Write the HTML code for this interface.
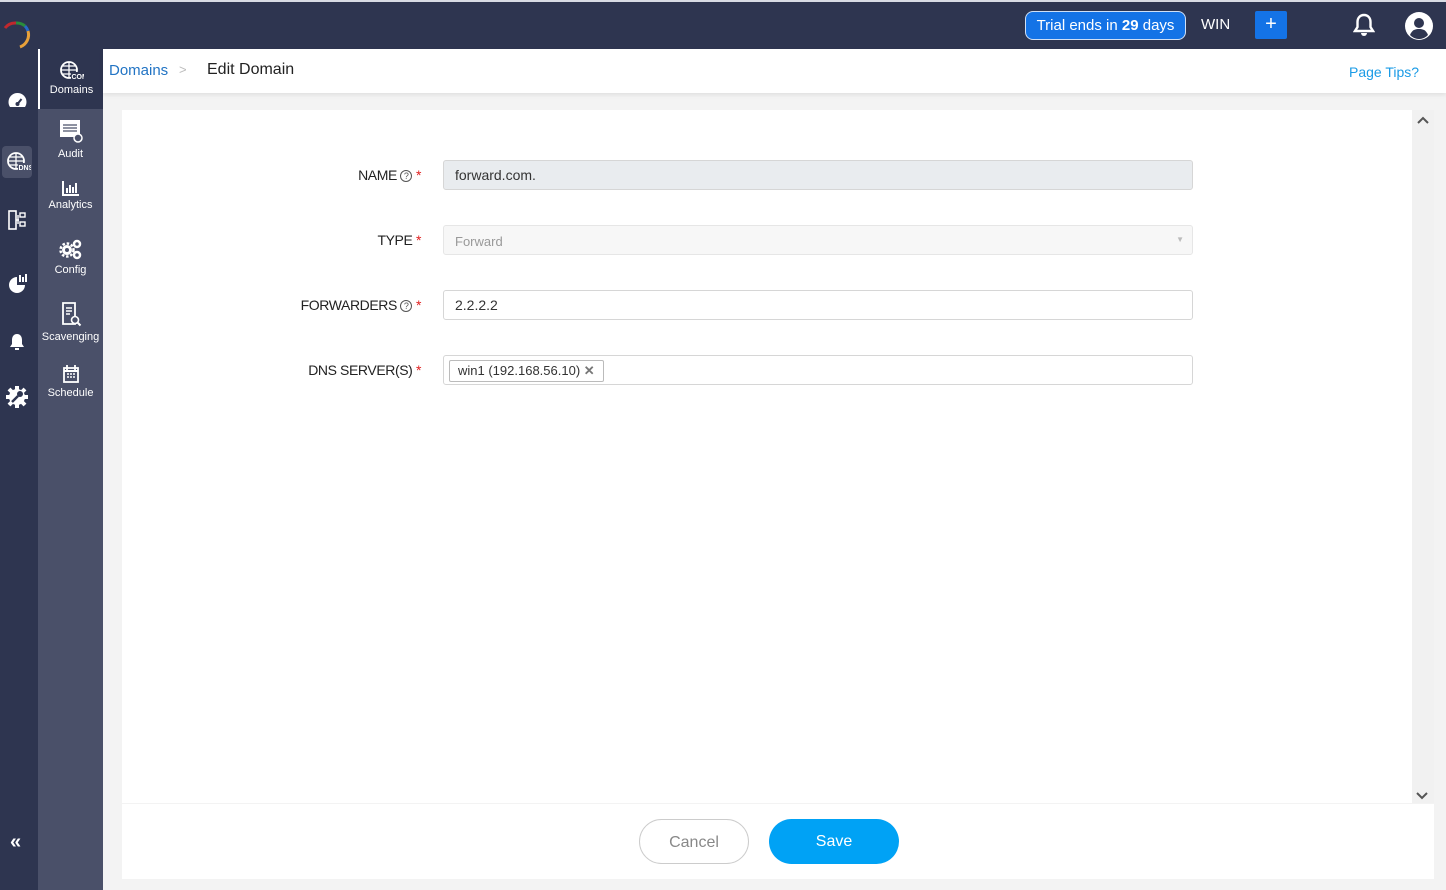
<!DOCTYPE html>
<html><head><meta charset="utf-8"><style>
*{box-sizing:border-box;margin:0;padding:0}
body{width:1446px;height:890px;overflow:hidden;font-family:"Liberation Sans",Arial,sans-serif;background:#f3f3f3;position:relative}
.top{position:absolute;left:0;top:0;width:1446px;height:49px;background:#2e3550;border-top:2px solid #d8dbe3}
.rail{position:absolute;left:0;top:49px;width:38px;height:841px;background:#2e3550}
.side{position:absolute;left:38px;top:49px;width:65px;height:841px;background:#4a5069}
.si{position:absolute;left:0;width:65px;text-align:center;color:#fff;font-size:11px}
.si svg{display:block;margin:0 auto 3px}
.crumb{position:absolute;left:103px;top:49px;width:1343px;height:44px;background:#fff;box-shadow:0 2px 4px rgba(0,0,0,.08)}
.card{position:absolute;left:122px;top:110px;width:1290px;height:693px;background:#fff}
.sb{position:absolute;left:1412px;top:110px;width:22px;height:693px;background:#f1f1f1}
.foot{position:absolute;left:122px;top:804px;width:1312px;height:75px;background:#fff}
.lbl{position:absolute;right:1025px;font-size:14px;color:#222;text-align:right;white-space:nowrap;letter-spacing:-0.4px}
.lbl .r{color:#e02020}
.q{display:inline-block;width:12px;height:12px;border:1px solid #555;border-radius:50%;font-size:9px;line-height:10px;text-align:center;vertical-align:1px;color:#555;letter-spacing:0}
.inp{position:absolute;left:443px;width:750px;height:30px;border:1px solid #d6d6d6;border-radius:3px;font-size:14px;color:#333;padding:6px 11px}
</style></head><body>
<div class="top">
  <svg style="position:absolute;left:2px;top:18px" width="30" height="30" viewBox="0 0 30 30"><path d="M3 8 A13 13 0 0 1 14 3" stroke="#c0282d" stroke-width="3" fill="none"/><path d="M14 3 A13 13 0 0 1 23 6" stroke="#2a8c3c" stroke-width="3" fill="none"/><path d="M23 6 A13 13 0 0 1 26 11" stroke="#2669c9" stroke-width="3" fill="none"/><path d="M26 11 A13 13 0 0 1 18 27" stroke="#e8a13a" stroke-width="3" fill="none"/></svg>
  <div style="position:absolute;left:1025px;top:9px;width:161px;height:29px;background:#1473e6;border:1px solid #cfe0f7;border-radius:8px;color:#fff;font-size:15px;line-height:27px;text-align:center">Trial ends in <b>29</b> days</div>
  <div style="position:absolute;left:1201px;top:14px;color:#fff;font-size:15px">WIN</div>
  <div style="position:absolute;left:1255px;top:9px;width:32px;height:28px;background:#1473e6;border-radius:2px;color:#fff;font-size:20px;line-height:27px;text-align:center">+</div>
  <svg style="position:absolute;left:1353px;top:11px" width="22" height="24" viewBox="0 0 22 24"><path d="M11 2c-4 0-6.5 3-6.5 7v5L2 18h18l-2.5-4V9c0-4-2.5-7-6.5-7z" fill="none" stroke="#fff" stroke-width="2.4"/><path d="M8 20a3 3 0 0 0 6 0" fill="#fff"/></svg>
  <svg style="position:absolute;left:1405px;top:10px" width="28" height="28" viewBox="0 0 28 28"><circle cx="14" cy="14" r="14" fill="#fff"/><circle cx="14" cy="11" r="5" fill="#2e3550"/><path d="M5 23c2-5 5-6 9-6s7 1 9 6a12 12 0 0 1-18 0z" fill="#2e3550"/></svg>
</div>
<div class="rail">
  <svg style="position:absolute;left:7px;top:43px" width="21" height="19" viewBox="0 0 21 19"><circle cx="10.5" cy="10" r="9" fill="#fff"/><rect x="0" y="15" width="21" height="4" fill="#2e3550"/><path d="M10.5 12l4-5" stroke="#2e3550" stroke-width="2"/><circle cx="10.5" cy="12" r="2" fill="#2e3550"/></svg>
  <div style="position:absolute;left:2px;top:97px;width:30px;height:32px;background:#4a5069;border-radius:4px"></div>
  <svg style="position:absolute;left:7px;top:103px" width="24" height="20" viewBox="0 0 24 20"><circle cx="9" cy="9" r="8" fill="none" stroke="#fff" stroke-width="1.8"/><path d="M1 9h16M9 1v16M3 5h12M3 13h12" stroke="#fff" stroke-width="1.3"/><rect x="11" y="11" width="13" height="8" fill="#4a5069"/><text x="11.5" y="18" font-size="7" fill="#fff" font-family="Liberation Sans" font-weight="bold">DNS</text></svg>
  <svg style="position:absolute;left:8px;top:161px" width="19" height="20" viewBox="0 0 19 20"><rect x="1" y="1" width="7" height="18" fill="none" stroke="#fff" stroke-width="1.6"/><rect x="12" y="3" width="5" height="4" fill="none" stroke="#fff" stroke-width="1.4"/><rect x="12" y="12" width="5" height="4" fill="none" stroke="#fff" stroke-width="1.4"/><path d="M8 10h3M10 5v9" stroke="#fff" stroke-width="1.4"/></svg>
  <svg style="position:absolute;left:8px;top:224px" width="20" height="20" viewBox="0 0 20 20"><path d="M9 4A8 8 0 1 0 17 12H9z" fill="#fff"/><path d="M12 2v7M15 4v5M18 1v8" stroke="#fff" stroke-width="2"/></svg>
  <svg style="position:absolute;left:9px;top:284px" width="16" height="18" viewBox="0 0 16 18"><path d="M8 1c-3.5 0-5 3-5 6v4l-2 3h14l-2-3V7c0-3-1.5-6-5-6z" fill="#fff"/><rect x="6" y="15" width="4" height="2" fill="#fff"/></svg>
  <svg style="position:absolute;left:5px;top:336px" width="24" height="24" viewBox="0 0 24 24"><circle cx="12" cy="12" r="8" fill="#fff"/><g stroke="#fff" stroke-width="4"><path d="M12 1v22M1 12h22M4 4l16 16M20 4L4 20"/></g><path d="M7 17l6-6" stroke="#2e3550" stroke-width="2.5"/><circle cx="15" cy="9" r="3" fill="#2e3550"/></svg>
  <div style="position:absolute;left:10px;top:782px;color:#fff;font-size:20px;font-weight:bold;letter-spacing:-3px">«</div>
</div>
<div class="side">
  <div class="si" style="top:0;height:60px;background:#2e3550;border-left:2px solid #fff;padding-top:12px">
    <svg width="24" height="20" viewBox="0 0 24 20"><circle cx="9" cy="9" r="8" fill="none" stroke="#fff" stroke-width="1.8"/><path d="M1 9h16M9 1v16M3 5h12M3 13h12" stroke="#fff" stroke-width="1.3"/><rect x="11" y="11" width="13" height="8" fill="#2e3550"/><text x="11.5" y="18" font-size="7" fill="#fff" font-family="Liberation Sans" font-weight="bold">COM</text></svg>Domains</div>
  <div class="si" style="top:70px"><svg width="24" height="26" viewBox="0 0 24 26"><rect x="1" y="1" width="20" height="17" fill="#fff"/><path d="M4 6h14M4 9h14M4 12h14" stroke="#4a5069" stroke-width="1.2"/><circle cx="19" cy="19" r="4" fill="#4a5069" stroke="#fff" stroke-width="1.5"/></svg>Audit</div>
  <div class="si" style="top:131px"><svg width="20" height="16" viewBox="0 0 20 16"><path d="M2 1v14h16" stroke="#fff" stroke-width="2" fill="none"/><path d="M6 13V8M9 13V5M12 13V7M15 13V3" stroke="#fff" stroke-width="2"/></svg>Analytics</div>
  <div class="si" style="top:190px"><svg width="24" height="22" viewBox="0 0 24 22"><circle cx="8" cy="11" r="5" fill="#fff"/><circle cx="8" cy="11" r="6.5" fill="none" stroke="#fff" stroke-width="2.5" stroke-dasharray="2.5 1.8"/><circle cx="8" cy="11" r="2" fill="#4a5069"/><circle cx="18" cy="5" r="3" fill="none" stroke="#fff" stroke-width="2.5"/><circle cx="18" cy="16" r="3" fill="none" stroke="#fff" stroke-width="2.5"/></svg>Config</div>
  <div class="si" style="top:253px"><svg width="22" height="26" viewBox="0 0 22 26"><path d="M3 1h12v21H3z" fill="none" stroke="#fff" stroke-width="1.8"/><path d="M6 6h6M6 9h6M6 12h4" stroke="#fff" stroke-width="1.4"/><circle cx="15" cy="18" r="3.5" fill="#4a5069" stroke="#fff" stroke-width="1.6"/><path d="M17.5 20.5l3 3" stroke="#fff" stroke-width="2"/></svg>Scavenging</div>
  <div class="si" style="top:315px"><svg width="18" height="20" viewBox="0 0 18 20"><rect x="2" y="4" width="14" height="14" fill="none" stroke="#fff" stroke-width="1.8"/><path d="M2 7h14" stroke="#fff" stroke-width="2"/><path d="M5 1v5M13 1v5" stroke="#fff" stroke-width="1.8"/><path d="M5 10h2M8 10h2M11 10h2M5 13h2M8 13h2M11 13h2" stroke="#fff" stroke-width="1.5"/></svg>Schedule</div>
</div>
<div class="crumb">
  <span style="position:absolute;left:6px;top:13px;color:#2274c4;font-size:15px">Domains</span>
  <span style="position:absolute;left:76px;top:13px;color:#bbb;font-size:13px">&gt;</span>
  <span style="position:absolute;left:104px;top:12px;color:#222;font-size:16px">Edit Domain</span>
  <span style="position:absolute;left:1246px;top:15px;color:#1a9be6;font-size:14px">Page Tips?</span>
</div>
<div class="card"></div>
<div class="sb"><svg style="position:absolute;left:5px;top:6px" width="12" height="8" viewBox="0 0 12 8"><path d="M1 7l5-5 5 5" stroke="#555" stroke-width="2" fill="none"/></svg></div>
<svg style="position:absolute;left:1416px;top:792px" width="12" height="8" viewBox="0 0 12 8"><path d="M1 1l5 5 5-5" stroke="#555" stroke-width="2" fill="none"/></svg>
<div class="lbl" style="top:167px">NAME <span class="q">?</span> <span class="r">*</span></div>
<div class="inp" style="top:160px;background:#e9ecef">forward.com.</div>
<div class="lbl" style="top:232px">TYPE <span class="r">*</span></div>
<div class="inp" style="top:225px;background:#f7f7f7;border-color:#e6e6e6;color:#999;font-size:13px;padding-top:8px">Forward<span style="position:absolute;right:8px;top:9px;font-size:8px;color:#bbb">&#9660;</span></div>
<div class="lbl" style="top:297px">FORWARDERS <span class="q">?</span> <span class="r">*</span></div>
<div class="inp" style="top:290px">2.2.2.2</div>
<div class="lbl" style="top:362px">DNS SERVER(S) <span class="r">*</span></div>
<div class="inp" style="top:355px;padding:4px 5px"><span style="display:inline-block;border:1px solid #bbb;border-radius:2px;padding:2px 8px;font-size:13px;color:#333">win1 (192.168.56.10) <b style="color:#777">&#10005;</b></span></div>
<div class="foot">
  <div style="position:absolute;left:517px;top:15px;width:110px;height:45px;border:1px solid #ccc;border-radius:23px;text-align:center;line-height:45px;color:#888;font-size:16px">Cancel</div>
  <div style="position:absolute;left:647px;top:15px;width:130px;height:45px;background:#00a2f5;border-radius:23px;text-align:center;line-height:45px;color:#fff;font-size:16px">Save</div>
</div>
</body></html>
